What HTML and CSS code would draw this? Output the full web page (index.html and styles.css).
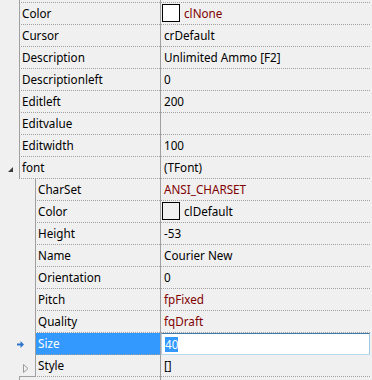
FILE: index.html
```html
<!DOCTYPE html>
<html>
<head>
<meta charset="utf-8">
<link rel="stylesheet" href="styles.css">
</head>
<body>
<div class="grid">
  <div class="row stub"><span class="gut"></span><span class="name"></span><span class="val"></span></div>
  <div class="row"><span class="gut"></span><span class="name">Color</span><span class="val mod"><span class="sw white"></span>clNone</span></div>
  <div class="row"><span class="gut"></span><span class="name">Cursor</span><span class="val">crDefault</span></div>
  <div class="row"><span class="gut"></span><span class="name">Description</span><span class="val">Unlimited Ammo [F2]</span></div>
  <div class="row"><span class="gut"></span><span class="name">Descriptionleft</span><span class="val">0</span></div>
  <div class="row"><span class="gut"></span><span class="name">Editleft</span><span class="val">200</span></div>
  <div class="row"><span class="gut"></span><span class="name">Editvalue</span><span class="val"></span></div>
  <div class="row"><span class="gut"></span><span class="name">Editwidth</span><span class="val">100</span></div>
  <div class="row"><span class="gut"><svg class="exp" width="6" height="6" viewBox="0 0 6 6"><polygon points="5,0 5,5 0,5" fill="#3c3c3c"/></svg></span><span class="name parent">font</span><span class="val">(TFont)</span></div>
  <div class="row child"><span class="gut"><span class="ind"></span></span><span class="name">CharSet</span><span class="val mod">ANSI_CHARSET</span></div>
  <div class="row child"><span class="gut"><span class="ind"></span></span><span class="name">Color</span><span class="val"><span class="sw"></span>clDefault</span></div>
  <div class="row child"><span class="gut"><span class="ind"></span></span><span class="name">Height</span><span class="val">-53</span></div>
  <div class="row child"><span class="gut"><span class="ind"></span></span><span class="name">Name</span><span class="val">Courier New</span></div>
  <div class="row child"><span class="gut"><span class="ind"></span></span><span class="name">Orientation</span><span class="val">0</span></div>
  <div class="row child"><span class="gut"><span class="ind"></span></span><span class="name">Pitch</span><span class="val mod">fpFixed</span></div>
  <div class="row child"><span class="gut"><span class="ind"></span></span><span class="name">Quality</span><span class="val mod">fqDraft</span></div>
  <div class="row child sel"><span class="gut arrowgut"><svg class="arrow" width="7" height="7" viewBox="0 0 7 7"><path d="M0 2.5h3.5V0L7 3.5 3.5 7V4.5H0z" fill="#2f74cc"/></svg></span><span class="name">Size</span><span class="val editcell"><span class="edit"><span class="seltext">40</span></span></span></div>
  <div class="row child last"><span class="gut"><span class="ind"><svg class="coll" width="6" height="9" viewBox="0 0 6 9"><polygon points="0.5,0.5 5,4.5 0.5,8.5" fill="none" stroke="#9a9a9a"/></svg></span></span><span class="name">Style</span><span class="val">[]</span></div>
  <div class="row"><span class="gut"></span><span class="name"></span><span class="val"></span></div>
</div>
</body>
</html>
```

FILE: styles.css
```css
html, body {
  margin: 0;
  padding: 0;
}
body {
  width: 372px;
  height: 380px;
  overflow: hidden;
  background: #f0f0f0;
  font-family: "Noto Sans", "Open Sans", sans-serif;
  font-size: 11.7px;
  color: #000;
}
.grid {
  width: 370px;
}
.row {
  display: flex;
  height: 22px;
}
.row.stub {
  height: 3px;
}
.gut {
  flex: none;
  width: 19px;
  display: flex;
  align-items: center;
  justify-content: flex-end;
}
.row.child .gut {
  width: 35px;
}
.ind {
  width: 16px;
  height: 100%;
  box-sizing: border-box;
  display: flex;
  align-items: center;
}
.row.last .ind {
  border-bottom: 1px solid #a0a0a0;
}
.name {
  flex: none;
  box-sizing: content-box;
  border-left: 1px solid #a0a0a0;
  border-bottom: 1px dotted #a0a0a0;
  padding-left: 2px;
  width: 138px;
  line-height: 21px;
  white-space: nowrap;
  overflow: hidden;
  position: relative;
}
.row.child .name {
  width: 122px;
}
.name.parent::after {
  content: "";
  position: absolute;
  left: -1px;
  bottom: -1px;
  width: 17px;
  height: 1px;
  background: #a0a0a0;
}
.val {
  flex: 1;
  border-left: 1px solid #a0a0a0;
  border-bottom: 1px dotted #a0a0a0;
  padding-left: 3px;
  line-height: 21px;
  white-space: nowrap;
  display: flex;
  align-items: center;
}
.val.mod {
  color: #800000;
}
.sw {
  box-sizing: border-box;
  width: 18px;
  height: 18px;
  border: 1px solid #000;
  margin-left: -2px;
  margin-right: 4px;
  margin-top: -1px;
  background: #f0f0f0;
}
.sw.white {
  background: #fff;
}
.exp {
  margin-right: 5px;
  margin-top: 4px;
}
.arrowgut {
  justify-content: flex-start;
  padding-left: 17px;
  box-sizing: border-box;
}
.coll {
  margin-left: 4px;
  margin-top: 6px;
}
.row.sel .name {
  background: #3399ff;
  color: #fff;
}
.editcell {
  padding-left: 0;
}
.edit {
  box-sizing: border-box;
  width: 209px;
  height: 22px;
  margin-bottom: -1px;
  background: #fff;
  border: 1px solid;
  border-color: #3d7bad #a4c9e3 #b7d9ed #b5cfe7;
  display: flex;
  align-items: center;
  padding-left: 3px;
}
.seltext {
  background: #3399ff;
  color: #fff;
  line-height: 15px;
}
```
